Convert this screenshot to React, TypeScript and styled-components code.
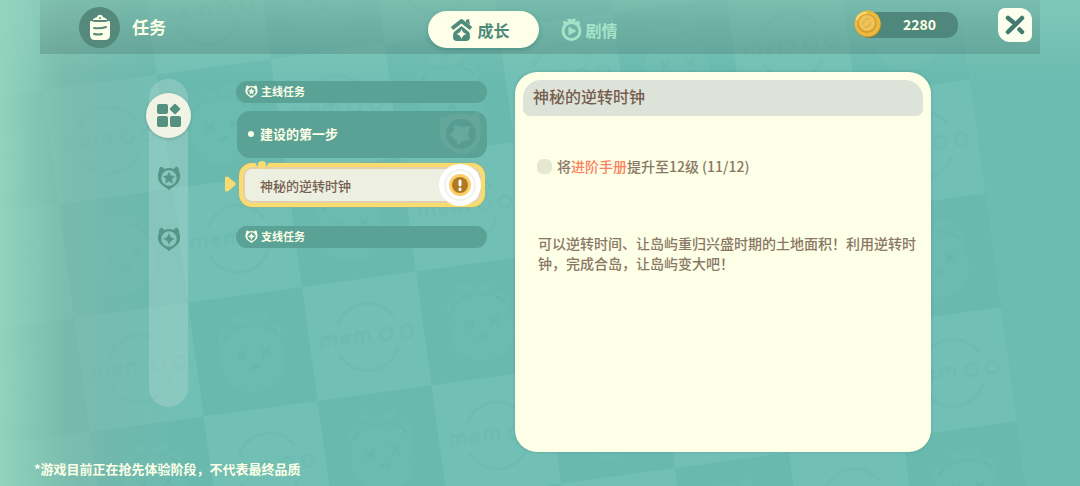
import React from "react";
import styled, { createGlobalStyle, css } from "styled-components";

const GlobalStyle = createGlobalStyle`
  *, *::before, *::after { box-sizing: border-box; }
  body {
    margin: 0;
    background: #6cbcb1;
    color: #fdffe6;
    font-family: "Noto Sans CJK SC", "Noto Sans", sans-serif;
  }
  button { font: inherit; color: inherit; border: 0; padding: 0; background: none; cursor: pointer; }
  h1, h2, h3, p, ul { margin: 0; padding: 0; }
  ul { list-style: none; }
  svg { display: block; flex: none; }
`;

const Page = styled.div`
  position: relative;
  isolation: isolate;
  min-height: 100vh;
  display: flex;
  flex-direction: column;
  overflow: hidden;
`;

const Backdrop = styled.div`
  position: absolute;
  inset: 0;
  z-index: -1;
  &::after {
    content: "";
    position: absolute;
    inset: 0;
    background:
      linear-gradient(180deg, rgba(150, 214, 192, 0.45), rgba(150, 214, 192, 0) 80px),
      linear-gradient(90deg, rgba(148, 212, 188, 0.95), rgba(142, 206, 184, 0.7) 30px, rgba(130, 188, 172, 0.6) 65px, rgba(122, 184, 170, 0.45) 110px, rgba(120, 184, 172, 0) 180px);
  }
`;

const TopBar = styled.header`
  display: grid;
  grid-template-columns: 1fr auto 1fr;
  align-items: center;
  height: 54px;
  margin: 0 40px;
  padding: 0 8px 0 39px;
  background: linear-gradient(180deg, rgba(84, 134, 124, 0.16), rgba(84, 134, 124, 0.42));
`;

const Brand = styled.div`
  display: flex;
  align-items: center;
  gap: 12px;
`;

const Badge = styled.span`
  display: grid;
  place-items: center;
  width: 41px;
  height: 41px;
  border-radius: 50%;
  background: #54897c;
`;

const Title = styled.h1`
  font-size: 17px;
  line-height: 24px;
  font-weight: 700;
`;

const Tabs = styled.nav`
  display: flex;
  padding-top: 5px;
  margin-right: 36px;
`;

const Tab = styled.button<{ $active?: boolean }>`
  display: flex;
  align-items: center;
  gap: 4px;
  height: 37px;
  padding: 0 29px 0 22px;
  border-radius: 19px;
  font-size: 16px;
  line-height: 24px;
  font-weight: 700;
  color: #a3e3c8;
  ${(p) =>
    p.$active &&
    css`
      background: #fdffe8;
      color: #4f8b7d;
      box-shadow: 0 2px 4px rgba(50, 110, 100, 0.4);
    `}
`;

const Tools = styled.div`
  display: flex;
  align-items: center;
  justify-content: flex-end;
  gap: 40px;
  padding-bottom: 4px;
`;

const Wallet = styled.div`
  display: flex;
  align-items: center;
  justify-content: space-between;
  width: 104px;
  height: 26px;
  padding: 0 22px 2px 0;
  border-radius: 12px;
  background: linear-gradient(90deg, transparent 12px, #4f877c 12px);
  font-size: 14px;
  line-height: 20px;
  font-weight: 700;
`;

const Close = styled.button`
  display: grid;
  place-items: center;
  width: 34px;
  height: 34px;
  border-radius: 7px 12px 7px 12px;
  background: #fdffee;
`;

const Main = styled.main`
  flex: 1;
  display: grid;
  grid-template-columns: 39px minmax(0, 327fr) minmax(0, 416fr);
  padding: 18px 149px 0;
`;

const Rail = styled.nav`
  display: flex;
  flex-direction: column;
  align-items: center;
  gap: 30px;
  margin: 7px 0 45px;
  padding-top: 14px;
  border-radius: 20px;
  background: rgba(168, 212, 204, 0.45);
`;

const RailButton = styled.button<{ $active?: boolean }>`
  display: grid;
  place-items: center;
  flex: none;
  width: 31px;
  height: 31px;
  border-radius: 50%;
  color: #569689;
  ${(p) =>
    p.$active &&
    css`
      width: 45px;
      height: 45px;
      margin: 0 -3px -6px;
      background: #f1f3e4;
      box-shadow: 0 1px 3px rgba(60, 110, 100, 0.35);
    `}
`;

const QuestColumn = styled.div`
  display: flex;
  flex-direction: column;
  padding-top: 9px;
  margin: 0 28px 0 48px;
`;

const GroupHeading = styled.h2`
  display: flex;
  align-items: center;
  gap: 3px;
  height: 22px;
  padding: 0 9px 2px;
  border-radius: 11px;
  background: #5ba296;
  font-size: 11px;
  line-height: 16px;
  font-weight: 700;
`;

const QuestList = styled.ul`
  display: flex;
  flex-direction: column;
  gap: 5px;
  padding: 8px 0 19px 1px;
`;

const QuestItem = styled.li`
  position: relative;
`;

const Quest = styled.button<{ $active?: boolean }>`
  display: flex;
  align-items: center;
  justify-content: space-between;
  width: 100%;
  height: 47px;
  padding: 0 4px 2px 11px;
  border-radius: 13px;
  overflow: hidden;
  background: #5ba296;
  font-size: 13px;
  line-height: 20px;
  font-weight: 700;
  ${(p) =>
    p.$active &&
    css`
      width: calc(100% - 4px);
      height: 44px;
      margin: 0 2px;
      padding: 2px 1px 0 17px;
      border: 4px solid #f9dc70;
      background: #edefe0;
      color: #75604f;
      font-weight: 500;
      box-shadow: inset 0 0 0 2px #e5cfa9, 0 0 2px #b9a466;
    `}
`;

const QuestName = styled.span`
  display: flex;
  align-items: center;
  gap: 6px;
`;

const Dot = styled.span`
  width: 6px;
  height: 6px;
  border-radius: 50%;
  background: #fdffe8;
`;

const Pointer = styled.svg`
  position: absolute;
  left: -13px;
  top: 13px;
`;

const Knob = styled.svg`
  position: absolute;
  left: 17px;
  top: -2px;
`;

const Alert = styled.svg`
  position: absolute;
  right: 5px;
  top: 0;
`;

const Detail = styled.article`
  padding: 8px;
  border-radius: 22px;
  background: #fdffe6;
  color: #8a7765;
  box-shadow: 0 0 3px rgba(50, 120, 110, 0.4);
`;

const DetailTitle = styled.h2`
  height: 36px;
  padding: 4px 10px;
  border-radius: 18px 18px 7px 7px;
  background: #dde3d9;
  color: #765e4f;
  font-size: 16px;
  line-height: 24px;
  font-weight: 500;
`;

const Goal = styled.p`
  display: flex;
  align-items: center;
  gap: 5px;
  margin: 40px 14px 0;
  font-size: 14px;
  line-height: 20px;
  font-weight: 500;
`;

const GoalMark = styled.span`
  width: 15px;
  height: 15px;
  border-radius: 6px;
  background: #e6e8d2;
`;

const Target = styled.em`
  font-style: normal;
  color: #fb825f;
`;

const Description = styled.p`
  margin: 57px 0 0 15px;
  font-size: 14px;
  line-height: 20px;
  font-weight: 500;
`;

const Footer = styled.footer`
  height: 34px;
  padding: 7px 34px;
  font-size: 13px;
  line-height: 20px;
  font-weight: 700;
`;

function Scenery() {
  return (
    <Backdrop aria-hidden="true">
      <svg width="100%" height="100%">
        <defs>
          <g id="bear">
            <rect x="25" y="33" width="64" height="64" rx="29" fill="#6cbbb1" />
            <circle cx="34" cy="41" r="9" fill="#6cbbb1" />
            <circle cx="80" cy="41" r="9" fill="#6cbbb1" />
            <path d="M58 30c-9 1-16-3-19-10 9-1 16 2 19 10zm0 0c3-8 10-11 20-10-3 8-10 11-20 10z" fill="#6cbbb1" />
            <path d="M31 44c0-5 4-8 8-8M83 44c0-5-4-8-8-8M41 55l9 9m0-9-9 9M66 55l9 9m0-9-9 9M53 75l5-4 5 4" fill="none" stroke="#68b7ad" strokeWidth="3" />
          </g>
          <g id="seal" fill="none" stroke="#6ebbb1" strokeWidth="3">
            <path d="M30 43a32 32 0 0 1 57-1M28 72a32 32 0 0 0 59 1" />
            <path d="M12 63v-8q4-5 7 0v8m0-8q4-5 7 0v8M40 59q-8 7-8-2 2-6 8-2l-7 4M46 63v-8q4-5 7 0v8m0-8q4-5 7 0v8" />
            <circle cx="77" cy="58" r="6" />
            <circle cx="98" cy="58" r="6" />
          </g>
          <pattern id="tiles" width="230" height="230" patternUnits="userSpaceOnUse">
            <rect width="230" height="230" fill="#69b9af" />
            <path d="M0 0h115v115H0zM115 115h115v115H115z" fill="#72bfb5" />
            <use href="#seal" />
            <use href="#seal" x="115" y="115" />
            <use href="#bear" x="115" />
            <use href="#bear" y="115" />
          </pattern>
        </defs>
        <g transform="translate(302 287) rotate(-7.8)">
          <rect x="-460" y="-460" width="1150" height="920" fill="url(#tiles)" />
        </g>
      </svg>
    </Backdrop>
  );
}

function ClipboardIcon() {
  return (
    <svg width="22" height="27" viewBox="0 0 22 27" fill="#fdffe8">
      <path d="M4 6c0-2 3-2 4-3 1-3 5-3 6 0 1 1 4 1 4 3z" />
      <path d="M2 7q2 0 3 1h12q1-1 3-1 1 0 1 1v13q0 5-5 5H6q-5 0-5-5V8q0-1 1-1z" />
      <circle cx="11" cy="4" r="1" fill="#54897c" />
      <path d="M5 14q6 1 12-1M5 20q4 1 8 0" fill="none" stroke="#54897c" strokeWidth="2" strokeLinecap="round" />
    </svg>
  );
}

function HouseIcon() {
  return (
    <svg width="23" height="23" viewBox="0 0 23 23" fill="currentColor">
      <path d="M2 10.500 11.500 3 21 10.500" fill="none" stroke="currentColor" strokeWidth="4" strokeLinejoin="round" />
      <path d="M16 2l3-1 1 6-4-3z" />
      <path fillRule="evenodd" d="M11.500 8 19 14q1 1 1 5t-4 4H7q-4 0-4-4t1-5zm0 3q-1 4-5 5 4 1 5 5 1-4 5-5-4-1-5-5z" />
    </svg>
  );
}

function StoryIcon() {
  return (
    <svg width="21" height="23" viewBox="0 0 21 23" fill="currentColor">
      <circle cx="10.500" cy="13" r="8.500" fill="none" stroke="currentColor" strokeWidth="3" />
      <path d="M7.500 8.500v9l8-4.500z" />
      <path d="M2 5q0-2 2-2l3 1-4 4zM19 5q0-2-2-2l-3 1 4 4zM6 1q3-1 4.500 1Q12 0 15 1l-2 4H8z" />
    </svg>
  );
}

function ShieldIcon({ size, star }: { size: number; star?: boolean }) {
  return (
    <svg width={size} height={size} viewBox="0 0 24 25" fill="currentColor">
      <path
        fillRule="evenodd"
        d="M3 1q2-1 4 2 5-2 10 0 2-3 4-2 2 2 1.500 5Q24 9 23.500 12c0 6-6 9-11.500 13C6.500 21 .5 18 .5 12Q0 9 1.500 6 1 3 3 1zM12 4.500a8 8 0 1 0 0 16 8 8 0 0 0 0-16z"
      />
      {star ? (
        <path d="m12 6 2 4 4.500.500-3.500 3 1 5-4-2.500-4 2.500 1-5-3.500-3L10 10z" />
      ) : (
        <path d="M12 6q1 5.500 6.500 6.500-5.500 1-6.500 6.500-1-5.500-6.500-6.500Q11 11.500 12 6z" />
      )}
    </svg>
  );
}

function GridIcon() {
  return (
    <svg width="24" height="25" viewBox="0 0 24 25" fill="#55917f">
      <rect x="0" y="1" width="11" height="10" rx="2" />
      <rect x="0" y="13" width="11" height="11" rx="2" />
      <rect x="13" y="13" width="11" height="11" rx="2" />
      <rect x="14" y="2" width="8" height="8" rx="1" transform="rotate(45 18 6)" />
    </svg>
  );
}

function CoinIcon() {
  return (
    <svg width="28" height="28" viewBox="0 0 28 28">
      <circle cx="14" cy="14.500" r="13" fill="#bd8a2b" />
      <circle cx="13.500" cy="13.500" r="13" fill="#eab93e" />
      <circle cx="13" cy="13.500" r="9.500" fill="#d79a2c" />
      <circle cx="13" cy="13" r="8" fill="#eec45c" />
      <path d="M9 15q1-7 7-6M10 17q5 1 7-5" fill="none" stroke="#e3b549" strokeWidth="2" />
      <path d="M3 9q3-6 9-6" fill="none" stroke="#f9dc7d" strokeWidth="2" strokeLinecap="round" />
    </svg>
  );
}

function CloseIcon() {
  return (
    <svg width="20" height="20" viewBox="0 0 20 20" fill="none" stroke="#44796f" strokeWidth="4.500" strokeLinecap="round">
      <path d="M3 17 17 3M3 3l5 4M14.500 14.500 17 17" />
    </svg>
  );
}

function QuestEmblem() {
  return (
    <svg width="45" height="47" viewBox="0 0 45 47">
      <path d="M2 8 11 6q11-5 22 0l8-5 2 18c1 13-6 21-15 25-13 0-26-9-26-22z" fill="#65a69b" />
      <circle cx="23" cy="24" r="15" fill="#579c90" />
      <path d="M16 15q8 3 17 1-5 7-1 14-8-1-12 6-1-8-9-11 7-3 5-10z" fill="#68a99e" />
    </svg>
  );
}

export default function App() {
  return (
    <Page>
      <GlobalStyle />
      <Scenery />
      <TopBar>
        <Brand>
          <Badge>
            <ClipboardIcon />
          </Badge>
          <Title>任务</Title>
        </Brand>
        <Tabs>
          <Tab $active>
            <HouseIcon />
            成长
          </Tab>
          <Tab>
            <StoryIcon />
            剧情
          </Tab>
        </Tabs>
        <Tools>
          <Wallet>
            <CoinIcon />
            2280
          </Wallet>
          <Close aria-label="关闭">
            <CloseIcon />
          </Close>
        </Tools>
      </TopBar>
      <Main>
        <Rail>
          <RailButton $active aria-label="全部">
            <GridIcon />
          </RailButton>
          <RailButton aria-label="主线">
            <ShieldIcon size={24} star />
          </RailButton>
          <RailButton aria-label="支线">
            <ShieldIcon size={24} />
          </RailButton>
        </Rail>
        <QuestColumn>
          <GroupHeading>
            <ShieldIcon size={13} star />
            主线任务
          </GroupHeading>
          <QuestList>
            <QuestItem>
              <Quest>
                <QuestName>
                  <Dot />
                  建设的第一步
                </QuestName>
                <QuestEmblem />
              </Quest>
            </QuestItem>
            <QuestItem>
              <Pointer width="12" height="16" viewBox="0 0 12 16">
                <path d="M2 2q0-1 2 0l6 5q1 1 0 2l-6 5q-2 1-2 0z" fill="#f9dc70" stroke="#f9dc70" strokeWidth="2" />
              </Pointer>
              <Quest $active>神秘的逆转时钟</Quest>
              <Knob width="16" height="8" viewBox="0 0 16 8">
                <path d="M1 1h14l-2 4H3z" fill="#70bdb3" />
                <circle cx="8" cy="4" r="4" fill="#f9dc70" />
              </Knob>
              <Alert width="44" height="44" viewBox="0 0 44 44">
                <circle cx="22" cy="22" r="21" fill="#fff" />
                <circle cx="22" cy="22" r="15" fill="none" stroke="#f2f1ea" strokeWidth="2" />
                <circle cx="22" cy="22" r="11" fill="#fbcf68" />
                <circle cx="22" cy="22" r="8" fill="#b17822" />
                <path d="M22 18v4m0 4v.500" stroke="#fff" strokeWidth="3" strokeLinecap="round" />
              </Alert>
            </QuestItem>
          </QuestList>
          <GroupHeading>
            <ShieldIcon size={13} />
            支线任务
          </GroupHeading>
        </QuestColumn>
        <Detail>
          <DetailTitle>神秘的逆转时钟</DetailTitle>
          <Goal>
            <GoalMark />
            <span>
              将<Target>进阶手册</Target>提升至12级 (11/12)
            </span>
          </Goal>
          <Description>
            可以逆转时间、让岛屿重归兴盛时期的土地面积！利用逆转时钟，完成合岛，让岛屿变大吧！
          </Description>
        </Detail>
      </Main>
      <Footer>*游戏目前正在抢先体验阶段，不代表最终品质</Footer>
    </Page>
  );
}
